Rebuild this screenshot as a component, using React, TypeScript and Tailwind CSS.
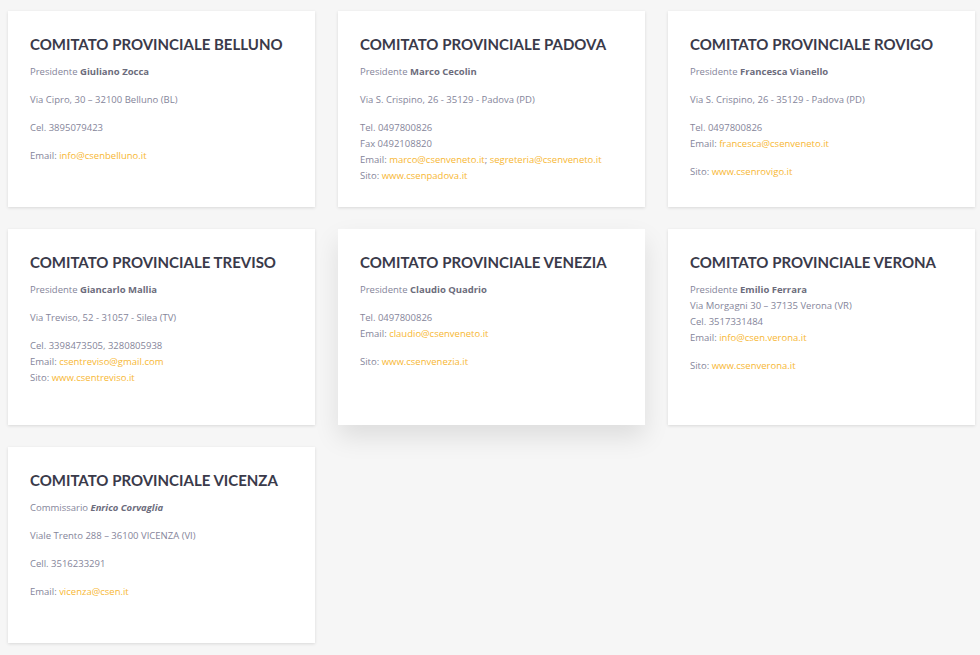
import React from "react";

type Line = React.ReactNode;
type Card = { title: string; paras: Line[][]; shadow?: boolean };

const L = ({ children }: { children: React.ReactNode }) => (
  <a className="text-[#f7b733]">{children}</a>
);

const cards: Card[] = [
  {
    title: "COMITATO PROVINCIALE BELLUNO",
    paras: [
      [<>Presidente <b className="font-bold text-[#6c6c7c]">Giuliano Zocca</b></>],
      [<>Via Cipro, 30 – 32100 Belluno (BL)</>],
      [<>Cel. 3895079423</>],
      [<>Email: <L>info@csenbelluno.it</L></>],
    ],
  },
  {
    title: "COMITATO PROVINCIALE PADOVA",
    paras: [
      [<>Presidente <b className="font-bold text-[#6c6c7c]">Marco Cecolin</b></>],
      [<>Via S. Crispino, 26 - 35129 - Padova (PD)</>],
      [
        <>Tel. 0497800826</>,
        <>Fax 0492108820</>,
        <>Email: <L>marco@csenveneto.it</L>; <L>segreteria@csenveneto.it</L></>,
        <>Sito: <L>www.csenpadova.it</L></>,
      ],
    ],
  },
  {
    title: "COMITATO PROVINCIALE ROVIGO",
    paras: [
      [<>Presidente <b className="font-bold text-[#6c6c7c]">Francesca Vianello</b></>],
      [<>Via S. Crispino, 26 - 35129 - Padova (PD)</>],
      [<>Tel. 0497800826</>, <>Email: <L>francesca@csenveneto.it</L></>],
      [<>Sito: <L>www.csenrovigo.it</L></>],
    ],
  },
  {
    title: "COMITATO PROVINCIALE TREVISO",
    paras: [
      [<>Presidente <b className="font-bold text-[#6c6c7c]">Giancarlo Mallia</b></>],
      [<>Via Treviso, 52 - 31057 - Silea (TV)</>],
      [
        <>Cel. 3398473505, 3280805938</>,
        <>Email: <L>csentreviso@gmail.com</L></>,
        <>Sito: <L>www.csentreviso.it</L></>,
      ],
    ],
  },
  {
    title: "COMITATO PROVINCIALE VENEZIA",
    shadow: true,
    paras: [
      [<>Presidente <b className="font-bold text-[#6c6c7c]">Claudio Quadrio</b></>],
      [<>Tel. 0497800826</>, <>Email: <L>claudio@csenveneto.it</L></>],
      [<>Sito: <L>www.csenvenezia.it</L></>],
    ],
  },
  {
    title: "COMITATO PROVINCIALE VERONA",
    paras: [
      [
        <>Presidente <b className="font-bold text-[#6c6c7c]">Emilio Ferrara</b></>,
        <>Via Morgagni 30 – 37135 Verona (VR)</>,
        <>Cel. 3517331484</>,
        <>Email: <L>info@csen.verona.it</L></>,
      ],
      [<>Sito: <L>www.csenverona.it</L></>],
    ],
  },
  {
    title: "COMITATO PROVINCIALE VICENZA",
    paras: [
      [<>Commissario <b className="font-bold italic text-[#6c6c7c]">Enrico Corvaglia</b></>],
      [<>Viale Trento 288 – 36100 VICENZA (VI)</>],
      [<>Cell. 3516233291</>],
      [<>Email: <L>vicenza@csen.it</L></>],
    ],
  },
];

export default function App() {
  return (
    <div className="min-h-[655px] w-[980px] bg-[#f6f6f6] pl-[8px] pt-[11px]">
      <div className="grid grid-cols-[307px_307px_307px] gap-x-[23px] gap-y-[22px]">
        {cards.map((c, i) => (
          <div
            key={i}
            className={
              c.shadow
                ? "h-[196px] bg-white px-[22px] pt-[23px] shadow-[0_12px_24px_rgba(0,0,0,0.1)]"
                : "h-[196px] bg-white px-[22px] pt-[23px] shadow-[0_1px_3px_rgba(0,0,0,0.12)]"
            }
          >
            <h2 className="font-['Lato',sans-serif] text-[15px] font-bold leading-[20px] text-[#3a3a4a]">
              {c.title}
            </h2>
            <div className="mt-[10px] font-['Open_Sans',sans-serif] text-[9.5px] leading-[16px] text-[#85859a]">
              {c.paras.map((p, j) => (
                <p key={j} className="mb-[12px]">
                  {p.map((ln, k) => (
                    <span key={k} className="block">
                      {ln}
                    </span>
                  ))}
                </p>
              ))}
            </div>
          </div>
        ))}
      </div>
    </div>
  );
}
